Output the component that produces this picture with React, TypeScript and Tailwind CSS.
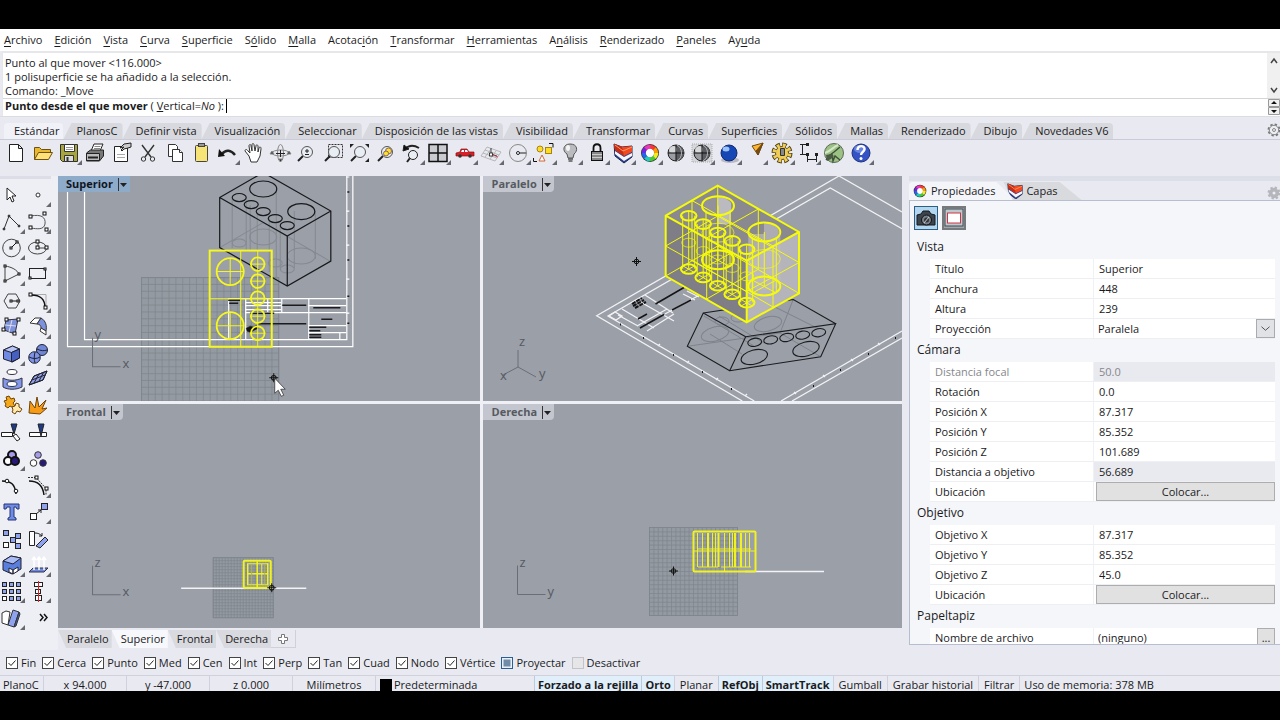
import type { ReactNode } from 'react';

const MENUS: [string, string, string][] = [
	['', 'A', 'rchivo'],
	['', 'E', 'dición'],
	['', 'V', 'ista'],
	['', 'C', 'urva'],
	['', 'S', 'uperficie'],
	['S', 'ó', 'lido'],
	['', 'M', 'alla'],
	['Acotac', 'i', 'ón'],
	['', 'T', 'ransformar'],
	['', 'H', 'erramientas'],
	['A', 'n', 'álisis'],
	['', 'R', 'enderizado'],
	['', 'P', 'aneles'],
	['Ay', 'u', 'da'],
];

const TABS = [
	'Estándar',
	'PlanosC',
	'Definir vista',
	'Visualización',
	'Seleccionar',
	'Disposición de las vistas',
	'Visibilidad',
	'Transformar',
	'Curvas',
	'Superficies',
	'Sólidos',
	'Mallas',
	'Renderizado',
	'Dibujo',
	'Novedades V6',
];

const OSNAPS = [
	'Fin',
	'Cerca',
	'Punto',
	'Med',
	'Cen',
	'Int',
	'Perp',
	'Tan',
	'Cuad',
	'Nodo',
	'Vértice',
];

/* ---------- icons ---------- */

type Tool = { name: string; art: ReactNode; more?: boolean };

const sq = (x: number, y: number, s = 3) => (
	<rect fill="#fff" height={s} stroke="#111" width={s} x={x} y={y} />
);

function ColorWheel() {
	const colors = [
		'#f33',
		'#f90',
		'#ee2',
		'#4c3',
		'#2cb',
		'#26e',
		'#72d',
		'#e3b',
	];
	return (
		<g>
			<circle cx="13" cy="13" fill="#333" r="9" />
			{colors.map((c, i) => (
				<circle
					cx="13"
					cy="13"
					fill="none"
					key={c}
					r="6.3"
					stroke={c}
					strokeDasharray="5.1 40"
					strokeWidth="4"
					transform={`rotate(${i * 45 - 90} 13 13)`}
				/>
			))}
			<circle cx="13" cy="13" fill="#fff" r="4.2" />
		</g>
	);
}

function LayersArt() {
	return (
		<g strokeLinejoin="round">
			<path
				d="M4 4l8 3 10-1v11l-8 6-9-7z"
				fill="#2c3f96"
				stroke="#1c2450"
			/>
			<path d="M5 11l9 6 8-4v3l-8 5-9-7z" fill="#f6f6f6" />
			<path d="M4 4l8 3 10-1v6l-8 4-9-6z" fill="#f2491f" />
			<path d="M4 4l8 3 2 9-9-6z" fill="#c92c12" />
			<path d="M5 5l8 6 9-4" fill="none" stroke="#ff9a70" />
		</g>
	);
}

const Lens = ({ d }: { d?: string }) => (
	<g fill="none" stroke="#444" transform="translate(1 0)">
		<path d="M9 16l-5 5" stroke="#222" strokeWidth="2" />
		<circle cx="13" cy="12" fill="#e9edf4" r="5.5" stroke="#555" />
		{d && <path d={d} stroke="#222" />}
	</g>
);

function Globe({ base }: { base: string }) {
	return (
		<g>
			<circle cx="13" cy="13" fill={base} r="8" stroke="#222" />
			<path d="M13 5a8 8 0 0 1 0 16z" fill="#5b5d62" />
			<ellipse cx="10" cy="9.5" fill="#fff" opacity="0.6" rx="4" ry="3.5" />
			<path d="M5 13h16M13 5v16" stroke="#111" />
			<path
				d="M14 21c6-3 6-13 0-16"
				fill="none"
				stroke="#ddd"
				strokeWidth="0.7"
			/>
		</g>
	);
}

const TOP_TOOLS: Tool[] = [
	{
		name: 'Nuevo',
		art: (
			<path
				d="M6.5 4.5h9l4 4v13h-13zM15.5 4.5v4h4"
				fill="#fff"
				stroke="#222"
			/>
		),
	},
	{
		name: 'Abrir',
		art: (
			<g stroke="#6e5213" strokeLinejoin="round">
				<path d="M4.5 19.5v-12h5l2 2h9v4" fill="#e9b932" />
				<path d="M4.5 19.5l4-7h14l-4 7z" fill="#ffe178" />
			</g>
		),
	},
	{
		name: 'Guardar',
		more: true,
		art: (
			<g stroke="#333">
				<path d="M4.5 4.5h17v17h-15l-2-2z" fill="#a8a43f" />
				<path d="M8.5 4.5h10v7h-10z" fill="#fff" />
				<path d="M8.5 15.5h9v6h-9z" fill="#ddd" />
				<path d="M10 7.5h7M10 9.5h7" stroke="#999" />
				<path d="M11.5 17v4" strokeWidth="2" />
			</g>
		),
	},
	{
		name: 'Imprimir',
		art: (
			<g stroke="#222" strokeLinejoin="round">
				<path d="M9 11l3-7h9l-3 7z" fill="#fff" />
				<path d="M4.5 13l4-3h13v6l-4 5h-13z" fill="#777" />
				<path d="M4.5 13.5h13v7h-13z" fill="#bbb" />
				<path d="M6 17.5h10" strokeWidth="2" />
				<path d="M12.5 6.5h6M12 8.5h6" stroke="#888" />
			</g>
		),
	},
	{
		name: 'Propiedades del documento',
		art: (
			<g stroke="#222">
				<path d="M5.5 6.5h13v15h-13z" fill="#fff" />
				<path d="M8 14.5h8M8 17.5h8" stroke="#aaa" />
				<path d="M11 8l4-4 7-1v4l-3 1-4 1-2 2-1-1 3-3z" fill="#ccc" />
			</g>
		),
	},
	{
		name: 'Cortar',
		art: (
			<g fill="none" stroke="#333">
				<path d="M7 5l9 12M19 5l-9 12" strokeWidth="1.4" />
				<circle cx="8.5" cy="19" r="2.2" />
				<circle cx="17.5" cy="19" r="2.2" />
			</g>
		),
	},
	{
		name: 'Copiar',
		art: (
			<g fill="#fff" stroke="#333">
				<path d="M6.5 4.5h7l2 2v10h-9z" />
				<path d="M10.5 9.5h7l3 3v9h-10z" />
				<path d="M17.5 9.5v3h3" />
			</g>
		),
	},
	{
		name: 'Pegar',
		art: (
			<g stroke="#444">
				<rect fill="#f7e477" height="16" rx="1" width="12" x="7.5" y="5.5" />
				<rect fill="#999" height="3" width="6" x="10.5" y="3.5" />
			</g>
		),
	},
	{
		name: 'Deshacer',
		more: true,
		art: (
			<g>
				<path
					d="M8 14c4-5 9-4 13 1"
					fill="none"
					stroke="#222"
					strokeWidth="2.5"
				/>
				<path d="M4 17l1-8 6 7z" fill="#111" />
			</g>
		),
	},
	{
		name: 'Desplazar vista',
		art: (
			<path
				d="M8 16l-4-5c0-2 2-2 3 0l2 2-1-7c0-2 2-2 2 0l1 5V5c0-2 2-2 2 0l1 6 1-5c0-2 2-1 2 0v6l1-4c1-2 2-1 2 1l-1 7-3 6h-6z"
				fill="#fff"
				stroke="#333"
				strokeLinejoin="round"
			/>
		),
	},
	{
		name: 'Rotar vista',
		art: (
			<g fill="none" stroke="#888">
				<ellipse cx="13.5" cy="13" rx="8.5" ry="3" />
				<ellipse cx="13.5" cy="13" rx="3" ry="8.5" />
				<path d="M13.5 10v7M9 13.5h9" stroke="#222" />
				<path d="M5 11l-2 3h4zM22 11l-2 3h4zM13.5 22l-2-3h4z" fill="#333" />
			</g>
		),
	},
	{ name: 'Zoom', art: <Lens d="M11 11h4M13 9v4M11 14.5h4" /> },
	{
		name: 'Zoom ventana',
		art: (
			<g>
				<rect
					fill="none"
					height="13"
					stroke="#333"
					strokeDasharray="2 1"
					width="14"
					x="8.5"
					y="4.5"
				/>
				<Lens />
			</g>
		),
	},
	{
		name: 'Zoom extensión',
		art: (
			<g>
				<Lens />
				<path d="M4 4h4l-4 4zM23 4h-4l4 4zM23 22h-4l4-4z" fill="#222" />
			</g>
		),
	},
	{
		name: 'Zoom seleccionado',
		art: (
			<g>
				<Lens />
				<circle cx="15.5" cy="11" fill="#ffe02c" r="3" stroke="#866" />
				<circle cx="13" cy="13.5" fill="#ffe02c" r="2.5" stroke="#866" />
			</g>
		),
	},
	{
		name: 'Deshacer vista',
		more: true,
		art: (
			<g fill="none" stroke="#222">
				<path d="M6 9c4-4 9-4 14-1" strokeWidth="2" />
				<path d="M4 11l1-6 5 4z" fill="#111" />
				<path d="M11 18l-3 4" strokeWidth="2" />
				<circle cx="14" cy="15" fill="#e9edf4" r="4.5" />
			</g>
		),
	},
	{
		name: 'Cuatro vistas',
		more: true,
		art: (
			<g>
				<rect
					fill="#c9cbd0"
					height="17"
					stroke="#111"
					strokeWidth="1.5"
					width="18"
					x="4"
					y="4.5"
				/>
				<path d="M4 13h18M13 5v16" stroke="#111" strokeWidth="1.5" />
			</g>
		),
	},
	{
		name: 'Coche',
		more: true,
		art: (
			<g>
				<path
					d="M4 13l4-1 1-3h6l2 3h5v4H4z"
					fill="#d8202a"
					stroke="#811"
					strokeWidth="0.7"
				/>
				<path d="M10 10h2v2H9zM13 10h2l1 2h-3z" fill="#fff" />
				<circle cx="8" cy="16" fill="#333" r="1.8" />
				<circle cx="18" cy="16" fill="#333" r="1.8" />
			</g>
		),
	},
	{
		name: 'Plano de construcción',
		more: true,
		art: (
			<g fill="none" stroke="#aaa" strokeWidth="0.8">
				<path d="M9 7l14 5-6 9-14-5zM7 10l14 5M5 13l14 5M13 9l-6 8M18 11l-6 8" />
				<path d="M13 14V8M13 14l6 2" stroke="#222" />
				<rect fill="#fff" height="3" stroke="#222" width="3" x="11.5" y="13" />
				<path d="M15 15l5 2" stroke="#c33" />
			</g>
		),
	},
	{
		name: 'Vistas',
		more: true,
		art: (
			<g fill="none" stroke="#888">
				<circle cx="13" cy="13" r="8.5" />
				<path d="M13 13h8" stroke="#222" />
				<circle cx="13" cy="13" fill="#fff" r="1.5" stroke="#222" />
			</g>
		),
	},
	{
		name: 'Seleccionar',
		more: true,
		art: (
			<g stroke="#a78312">
				<circle cx="9" cy="9" fill="#ffdc24" r="3" />
				<rect fill="#ffdc24" height="6" width="6" x="14.5" y="7.5" />
				<path d="M11 15l3 6H8z" fill="#fff" stroke="#c63" />
				<path d="M18 3.5h4v4M2.5 18v3.5H6" fill="none" stroke="#111" />
			</g>
		),
	},
	{
		name: 'Ocultar',
		more: true,
		art: (
			<g stroke="#555">
				<path d="M13 4c8 0 8 7 4 10l-1 4h-5l-1-4C5 11 6 4 13 4z" fill="#b9bbbf" />
				<ellipse cx="11" cy="8" fill="#f4f4f4" rx="2" ry="3" stroke="none" />
				<path d="M11 19h5M11.5 21h4" strokeWidth="1.5" />
			</g>
		),
	},
	{
		name: 'Bloquear',
		more: true,
		art: (
			<g stroke="#111">
				<path d="M9.5 12V8c0-5 7-5 7 0v4" fill="none" strokeWidth="1.8" />
				<rect fill="#888" height="9" width="11" x="7.5" y="11.5" />
				<path d="M8 14.5h10M8 17.5h10" stroke="#ccc" />
			</g>
		),
	},
	{ name: 'Capas', more: true, art: <LayersArt /> },
	{ name: 'Propiedades', more: true, art: <ColorWheel /> },
	{ name: 'Sombreado', art: <Globe base="#9b9da2" /> },
	{
		name: 'Sombreado de vista',
		more: true,
		art: (
			<g>
				<path
					d="M3 4h20v18H3z"
					fill="#d6d7db"
					stroke="#aaa"
					strokeDasharray="1 1"
				/>
				<Globe base="#9b9da2" />
			</g>
		),
	},
	{
		name: 'Renderizar',
		more: true,
		art: (
			<g>
				<ellipse cx="14" cy="20" fill="#99a" opacity="0.6" rx="9" ry="3" />
				<circle cx="13" cy="13" fill="#1747b5" r="8" stroke="#112a70" />
				<ellipse cx="10" cy="9" fill="#9cc4ff" rx="3.5" ry="2.5" />
			</g>
		),
	},
	{
		name: 'Foco',
		more: true,
		art: (
			<g stroke="#6d4a12" strokeLinejoin="round">
				<path d="M10 6l11-3-5 12z" fill="#ffb52e" />
				<path d="M21 3l-5 12-2-4z" fill="#7c4a10" />
			</g>
		),
	},
	{
		name: 'Opciones',
		more: true,
		art: (
			<g fill="none">
				<circle
					cx="13"
					cy="13"
					r="8"
					stroke="#4f3e10"
					strokeDasharray="4.2 2.08"
					strokeWidth="5"
				/>
				<circle cx="13" cy="13" fill="#efce58" r="6.5" stroke="#5f4c18" />
				<circle
					cx="13"
					cy="13"
					r="7.5"
					stroke="#efce58"
					strokeDasharray="2.7 3.19"
					strokeDashoffset="-0.6"
					strokeWidth="4"
				/>
				<path d="M11.5 8.5h4v7h-4z" fill="#888" stroke="#333" />
			</g>
		),
	},
	{
		name: 'Acotar',
		more: true,
		art: (
			<g fill="none" stroke="#222">
				<path d="M5 4.5h7M7.5 5v9M5 14.5h7M12.5 15v7M21.5 15v7M13 19.5h8" />
				<path
					d="M11 3h3v3h-3zM11 13h3v3h-3zM20 13h3v3h-3z"
					fill="#222"
					stroke="none"
				/>
			</g>
		),
	},
	{
		name: 'Grasshopper',
		art: (
			<g>
				<circle cx="13" cy="13" fill="#9cc184" r="9.5" stroke="#5a6a54" />
				<path
					d="M4 13c6-2 8-6 13-8"
					fill="none"
					stroke="#d4e8c8"
					strokeWidth="2"
				/>
				<path
					d="M5 20l4-5 4-3 6-5M11 14l1 7 2-5 5 4"
					fill="none"
					stroke="#3d5038"
					strokeWidth="1.4"
				/>
				<path d="M5 15l5-1 3 2-3 3-4 2z" fill="#4a5c45" />
			</g>
		),
	},
	{
		name: 'Ayuda',
		more: true,
		art: (
			<g>
				<circle cx="13" cy="13" fill="#3453c4" r="9" stroke="#22307a" />
				<ellipse cx="12" cy="9" fill="#7f9af0" opacity="0.7" rx="6" ry="4" />
				<path
					d="M9.500 10c0-5 7-5 7-1 0 3-3.500 3-3.500 6"
					fill="none"
					stroke="#fff"
					strokeWidth="2.4"
				/>
				<circle cx="13" cy="18.500" fill="#fff" r="1.5" />
			</g>
		),
	},
];

const SIDE_TOOLS: Tool[] = [
	{
		name: 'Seleccionar objetos',
		art: (
			<path d="M8 6v12l3-3 2 5 2-1-2-5h4z" fill="#fff" stroke="#222" />
		),
	},
	{
		name: 'Punto',
		more: true,
		art: <circle cx="13" cy="13" fill="#fff" r="2" stroke="#333" />,
	},
	{
		name: 'Polilínea',
		more: true,
		art: (
			<g fill="#333" stroke="#333">
				<path d="M5 20L10 7l10 10" fill="none" />
				<circle cx="5" cy="20" r="1" />
				<circle cx="10" cy="7" r="1" />
				<circle cx="20" cy="17" r="1" />
			</g>
		),
	},
	{
		name: 'Curva',
		more: true,
		art: (
			<g fill="none" stroke="#555">
				<path d="M6 7c10-2 15 1 14 8-1 6-8 5-14 4" />
				{sq(4, 6)}
				{sq(18, 3)}
				{sq(4, 17)}
				{sq(20, 19)}
			</g>
		),
	},
	{
		name: 'Círculo',
		more: true,
		art: (
			<g fill="none" stroke="#444">
				<circle cx="12.5" cy="13" r="8.8" />
				<path d="M12 13l6-6" stroke="#111" />
				{sq(11, 12, 2)}
				{sq(17, 6, 2)}
			</g>
		),
	},
	{
		name: 'Elipse',
		more: true,
		art: (
			<g fill="none" stroke="#444">
				<ellipse cx="12.5" cy="13" rx="9" ry="6" />
				<path d="M13 13h8M13 13V7" />
				{sq(11, 11)}
				{sq(20, 11)}
				{sq(11, 5)}
			</g>
		),
	},
	{
		name: 'Arco',
		more: true,
		art: (
			<g fill="none" stroke="#444">
				<path d="M6 5c7 1 12 4 14 8L6 20z" />
				{sq(5, 4, 2)}
				{sq(19, 12, 2)}
				{sq(5, 19, 2)}
			</g>
		),
	},
	{
		name: 'Rectángulo',
		more: true,
		art: (
			<g fill="none" stroke="#222">
				<rect height="10" width="16" x="4.5" y="7.5" />
				{sq(4, 16, 2)}
				{sq(19, 7, 2)}
			</g>
		),
	},
	{
		name: 'Polígono',
		more: true,
		art: (
			<g fill="none" stroke="#444">
				<path d="M9 6h8l4 7-4 7H9l-4-7z" />
				<path d="M13 13h6" stroke="#111" />
				{sq(11, 12, 2)}
				{sq(18, 12, 2)}
			</g>
		),
	},
	{
		name: 'Empalme',
		more: true,
		art: (
			<g fill="none">
				<path d="M6 6.5h15V20" stroke="#aaa" />
				<path d="M6 7c10 0 14 4 14 13" stroke="#111" strokeWidth="1.5" />
				{sq(4, 5)}
				{sq(19, 18)}
			</g>
		),
	},
	{
		name: 'Superficie por puntos',
		more: true,
		art: (
			<g stroke="#334">
				<path d="M7 6l12-1-3 15-11-4z" fill="#7d92d8" />
				<path d="M13 6l-3 12M6 11l11 1" stroke="#dde" />
				{sq(6, 4)}
				{sq(18, 4)}
				{sq(3, 14)}
				{sq(14, 18)}
			</g>
		),
	},
	{
		name: 'Barrido',
		more: true,
		art: (
			<g stroke="#333" strokeLinejoin="round">
				<path d="M5 9l5-5h6l-4 6z" fill="#fff" />
				<path d="M16 4c5 3 6 8 5 13l-5-3c0-2-1-4-4-4z" fill="#7d91dd" />
				<path d="M21 17v4l-6-4 1-3z" fill="#fff" />
			</g>
		),
	},
	{
		name: 'Caja',
		more: true,
		art: (
			<g stroke="#223" strokeLinejoin="round">
				<path d="M4.5 9l9-4 7 3v9l-7 4-9-3z" fill="#6f8ae2" />
				<path d="M4.5 9l9-4 7 3-8 3.5z" fill="#b5c3f5" />
				<path d="M12.500 11.500V21l8-4V8z" fill="#4560c0" />
			</g>
		),
	},
	{
		name: 'Unión booleana',
		more: true,
		art: (
			<g stroke="#223">
				<circle cx="17" cy="9" fill="#6f85d6" r="5.5" />
				<circle cx="9.5" cy="16.5" fill="#7d93e6" r="5.8" />
				<path
					d="M4 16c4 2 8 2 11 0M10 11c-1 4-1 8 0 11M12 8c4 2 7 2 10 1"
					fill="none"
				/>
			</g>
		),
	},
	{
		name: 'Proyectar sobre superficie',
		more: true,
		art: (
			<g stroke="#334">
				<ellipse cx="13" cy="5" fill="#fff" rx="5" ry="2.5" />
				<path d="M4 11c5 3 13 3 19 0v9c-6 3-14 3-19 0z" fill="#8398e8" />
				<ellipse cx="13" cy="17" fill="#fff" rx="5" ry="2.5" />
			</g>
		),
	},
	{
		name: 'Superficie',
		more: true,
		art: (
			<g stroke="#223">
				<path d="M4 18l5-9 13-5-4 9z" fill="#8fa0e4" />
				<path d="M4 18l5-9 13-5-4 9zM7 13l13-5M9 16l5-9M13.500 15l5-9.500" fill="none" />
			</g>
		),
	},
	{
		name: 'Explotar',
		art: (
			<g fill="#f5a81c" stroke="#6e4508">
				<path d="M5 8l3-1-1-3 3-1 2 3 3-1 1 3-2 2 2 3-3 1-2-1-2 2-3-2 1-2z" />
				<path
					d="M13 14l3-1 1-3 3 1v3l3 2-2 3-3-1-2 3-3-2 1-2z"
					fill="#ffe9b0"
				/>
			</g>
		),
	},
	{
		name: 'Descomponer',
		art: (
			<path
				d="M4 20l1-12 5 7 2-11 2 10 7-7-4 9 5-1-7 6z"
				fill="#f79a16"
				stroke="#6e4508"
			/>
		),
	},
	{
		name: 'Recortar',
		art: (
			<g stroke="#222">
				<path d="M2.5 12.5h11v4h-11z" fill="#fff" />
				<path d="M12 4h6l-3 10z" fill="#1e3c86" />
				<path d="M14 16l3-2 4 5-3 2z" fill="#fff" />
			</g>
		),
	},
	{
		name: 'Partir',
		art: (
			<g stroke="#222">
				<path d="M4.5 12.5h17v4h-17z" fill="#fff" />
				<path d="M13 4h6l-3 12z" fill="#1e3c86" />
			</g>
		),
	},
	{
		name: 'Agrupar',
		more: true,
		art: (
			<g stroke="#111" strokeWidth="2">
				<circle cx="13" cy="9" fill="#a59be8" r="4" />
				<circle cx="9" cy="15" fill="#fff" r="4" />
				<circle cx="16" cy="15" fill="#27187a" r="4" />
			</g>
		),
	},
	{
		name: 'Desagrupar',
		art: (
			<g stroke="#333">
				<circle cx="13" cy="9" fill="#a59be8" r="3.3" />
				<circle cx="8.5" cy="17" fill="#fff" r="3.3" />
				<circle cx="18" cy="17" fill="#27187a" r="3.3" />
			</g>
		),
	},
	{
		name: 'Editar puntos',
		art: (
			<g fill="none">
				<path d="M3 8c9 0 13 3 14 13" stroke="#111" strokeWidth="1.5" />
				<circle cx="8" cy="8" fill="#fff" r="1.8" stroke="#111" />
				<circle cx="17" cy="18" fill="#fff" r="1.8" stroke="#111" />
			</g>
		),
	},
	{
		name: 'Puntos de control',
		more: true,
		art: (
			<g fill="none">
				<path d="M3 4.5h8l10 11v6" stroke="#333" strokeDasharray="2 1" />
				<path d="M4 8c9 0 14 5 15 14" stroke="#111" strokeWidth="1.5" />
				{sq(10, 3)}
				{sq(20, 14)}
			</g>
		),
	},
	{
		name: 'Texto',
		art: (
			<path
				d="M5 5h15v5h-2l-1-2h-2v10l2 1v2H9v-2l2-1V8H8l-1 2H5z"
				fill="#6f8ce2"
				stroke="#24337a"
			/>
		),
	},
	{
		name: 'Mover',
		more: true,
		art: (
			<g stroke="#222">
				<rect fill="#fff" height="6" width="6" x="5.5" y="14.5" />
				<rect fill="#8fa2ee" height="6" width="6" x="16.5" y="4.5" />
				<path d="M11 15l5-4M13 11h3v3" fill="none" />
			</g>
		),
	},
	{
		name: 'Copiar objetos',
		art: (
			<g fill="#8fa2ee" stroke="#222">
				<rect height="5" width="5" x="4.5" y="4.5" />
				<rect height="5" width="5" x="16.5" y="7.5" />
				<rect height="5" width="5" x="11.5" y="11.5" />
				<rect fill="#fff" height="5" width="5" x="4.5" y="16.5" />
				<rect height="5" width="5" x="16.5" y="17.5" />
			</g>
		),
	},
	{
		name: 'Rotar',
		art: (
			<g stroke="#222">
				<path d="M4.5 5.5h5v14h-5z" fill="#fff" />
				<path d="M11 20l9-9 3 3-8 8z" fill="#8fa2ee" />
				<path d="M10 7c3 0 5 1 7 3M17 7v3h-3" fill="none" />
			</g>
		),
	},
	{
		name: 'Extruir caja',
		more: true,
		art: (
			<g stroke="#223" strokeLinejoin="round">
				<path d="M4 9l8-5 10 2v11l-9 5-9-4z" fill="#5a7edc" />
				<path d="M4 9l8-5 10 2-8 6z" fill="#a9bbf5" />
				<path d="M10 16l4 2v4l-4-2zM14 18l5-3v4l-5 3z" fill="#fff" />
			</g>
		),
	},
	{
		name: 'Analizar dirección',
		more: true,
		art: (
			<g>
				<path d="M4 20l4-4h15l-4 4z" fill="#6d8ade" stroke="#334" />
				<path
					d="M9 18V6M14 18V6M19 18V6M7 8l2-3 2 3M12 8l2-3 2 3M17 8l2-3 2 3"
					fill="none"
					stroke="#fff"
					strokeWidth="1.5"
				/>
			</g>
		),
	},
	{
		name: 'Matriz',
		more: true,
		art: (
			<g stroke="#222">
				{[3.5, 10.5, 17.5].map((x) =>
					[4.5, 11.5, 18.5].map((y) => (
						<rect
							fill={x < 5 && y > 17 ? '#fff' : '#8fa2ee'}
							height="4"
							key={`${x}-${y}`}
							width="4"
							x={x}
							y={y}
						/>
					))
				)}
			</g>
		),
	},
	{
		name: 'Alinear',
		more: true,
		art: (
			<g fill="#fff" stroke="#222">
				<rect height="4" width="8" x="9.5" y="4.5" />
				<rect height="4" width="5" x="10.5" y="11.5" />
				<rect height="5" width="6" x="10.5" y="17.5" />
				<path d="M13.5 3v21" stroke="#d22" />
			</g>
		),
	},
	{
		name: 'Láminas',
		more: true,
		art: (
			<g stroke="#333">
				<path d="M3 8l4-2 4 1-2 13-6-2z" fill="#fff" />
				<path d="M14 5l6 2-5 15-6-2z" fill="#8fa2ee" />
				<path d="M20 7l1 2-4 12-2 1z" fill="#4059b5" />
			</g>
		),
	},
	{
		name: 'Más herramientas',
		art: (
			<path
				d="M15 9l3 3.5-3 3.5M19 9l3 3.5-3 3.5"
				fill="none"
				stroke="#111"
				strokeWidth="1.5"
			/>
		),
	},
];

function ToolButton({ tool, side }: { tool: Tool; side?: boolean }) {
	return (
		<button
			aria-label={tool.name}
			className="flex min-w-0 flex-1 items-center justify-center"
			type="button"
		>
			<svg
				className="h-[26px] w-[26px] shrink-0"
				viewBox={side ? '1 0 26 26' : '0 0 26 26'}
			>
				{tool.art}
				{tool.more && <path d="M26 20v5h-5z" fill="#666a70" />}
			</svg>
		</button>
	);
}

function Gear({ solid }: { solid?: boolean }) {
	return (
		<svg className="h-[14px] w-[14px]" viewBox="0 0 14 14">
			<circle
				cx="7"
				cy="7"
				fill="none"
				r="5.5"
				stroke={solid ? '#b4b6bc' : '#777'}
				strokeDasharray="2.3 2.02"
				strokeWidth="2"
			/>
			<circle
				cx="7"
				cy="7"
				fill={solid ? '#b4b6bc' : '#eceef3'}
				r="4.7"
				stroke={solid ? '#b4b6bc' : '#888'}
			/>
			<circle
				cx="7"
				cy="7"
				fill={solid ? '#eceef3' : 'none'}
				r="1.5"
				stroke={solid ? 'none' : '#888'}
			/>
		</svg>
	);
}

/* ---------- viewports ---------- */

function Grid({ x, y, size }: { x: number; y: number; size: number }) {
	const step = size / 20;
	const lines = Array.from({ length: 21 }, (_, i) => i * step);
	return (
		<g stroke="#7f858d" strokeWidth="0.7">
			<rect fill="#939aa1" height={size} width={size} x={x} y={y} />
			{lines.map((d) => (
				<path d={`M${x + d} ${y}v${size}M${x} ${y + d}h${size}`} key={d} />
			))}
		</g>
	);
}

function Crosshair({ x, y }: { x: number; y: number }) {
	return (
		<g fill="none" stroke="#111" transform={`translate(${x} ${y})`}>
			<path d="M-4.5 0h9M0-4.5v9" />
			<circle r="2.3" />
		</g>
	);
}

function Axes({
	x,
	y,
	up,
	side,
}: {
	x: number;
	y: number;
	up: string;
	side: string;
}) {
	return (
		<g fill="#555a62" fontSize="13">
			<path d={`M${x} ${y - 29}V${y}h28`} fill="none" stroke="#6a6f77" />
			<text x={x + 2} y={y - 28}>
				{up}
			</text>
			<text x={x + 30} y={y + 1}>
				{side}
			</text>
		</g>
	);
}

function Viewport({
	title,
	viewBox,
	active,
	children,
}: {
	title: string;
	viewBox: string;
	active?: boolean;
	children: ReactNode;
}) {
	return (
		<section className="relative min-h-0 min-w-0 overflow-hidden bg-[#9b9fa8]">
			<svg
				className="absolute inset-0 h-full w-full"
				preserveAspectRatio="xMinYMin slice"
				viewBox={viewBox}
			>
				{children}
			</svg>
			<button
				className={
					active
						? 'absolute top-0 left-0 flex h-4 items-center gap-1 bg-[#8eabca] pr-[2px] pl-2 font-bold text-[#10161f]'
						: 'absolute top-0 left-0 flex h-4 items-center gap-1 rounded-br-sm bg-[#c3c6ce] pr-[2px] pl-2 font-bold text-[#565a61]'
				}
				type="button"
			>
				{title}
				<svg className="h-[13px] w-[11px]" viewBox="0 0 11 13">
					<path d="M1.5 0v13" stroke="#333" />
					<path d="M3 5h7l-3.500 4z" fill="#222" />
				</svg>
			</button>
		</section>
	);
}

function TopView() {
	const small = [264, 281, 298, 316, 333];
	return (
		<>
			<Grid size={137} x={141.5} y={277.5} />
			<g fill="none" stroke="#858a91">
				<path d="M232 198v50M246 198v52M250 205v45M276 189v90M294 211v52M315 211v48M257 212v54M269 212v60M280 226v42M294 226v42" />
				<path d="M219.5 247.5l43.5-25 67.5 39" />
				<ellipse cx="263" cy="237" rx="13.5" ry="8" />
				<ellipse cx="301" cy="256" rx="14" ry="8" />
				<ellipse cx="239" cy="243" rx="7" ry="4" />
				<ellipse cx="275" cy="263" rx="7" ry="4" />
				<ellipse cx="287" cy="269" rx="7" ry="4" />
			</g>
			<g fill="none" stroke="#fff" strokeWidth="1.2">
				<path d="M67.5 176v170.5h285V176M84.5 176v163.5h262V176" />
				<path d="M346 177h3M346 211h3M346 245h3M346 279h3M346 313h3" />
				<path d="M228 298.5h118M245 312.5h101M308 305.5h38M308 325.5h38M308 332.5h38" />
				<path d="M228.5 298v41M245.5 298v41M267.5 298v14M281.5 298v14M308.5 298v41M339.5 332v7" />
				<path d="M245 302.5h36M245 305.5h36M245 309.5h36" />
			</g>
			<g stroke="#1b1b1e" strokeWidth="1.5">
				<path d="M282 305h24M313 307.5h27M321 319h11M258 323.5h48M309 327h17M309 330.5h11M309 334.5h12M309 337h12M228 300h12M229 303h9M250 313h24" />
				<path d="M347 192h2M347 226h2M347 260h2M347 296h2M347 323h2" />
				<path
					d="M246 328l4-2 4 1 2-2 2 3-4 2-4 2-3-1z"
					fill="#111"
					strokeWidth="0.5"
				/>
			</g>
			<g fill="none" stroke="#17181b" strokeWidth="1.2">
				<path d="M219.5 197.5L263 172.5l67.5 38.5v50L287 286l-67.5-38.5zM219.5 197.5L287 236l43.5-25M287 236v50" />
				<ellipse cx="263" cy="189" rx="13.5" ry="8" />
				<ellipse cx="301" cy="211.5" rx="13.5" ry="8" />
				{[0, 1, 2, 3, 4].map((i) => (
					<ellipse
						cx={239 + i * 12}
						cy={197.5 + i * 7}
						key={i}
						rx="7"
						ry="4"
					/>
				))}
			</g>
			<g fill="none" stroke="#f5f71f">
				<rect height="96" strokeWidth="2" width="62" x="209.5" y="250.5" />
				<path d="M240.5 251v95M210 298.5h61M257.5 251v95" />
				<g strokeWidth="1.8">
					<circle cx="230" cy="271.5" r="13.5" />
					<circle cx="230" cy="325.5" r="13.5" />
					{small.map((y) => (
						<circle cx="257.5" cy={y} key={y} r="6.8" />
					))}
				</g>
				<path d="M217 271.5h27M230 258v27M217 325.5h27M230 312v27" />
				{small.map((y) => (
					<path d={`M250 ${y}h15`} key={y} />
				))}
			</g>
			<Axes side="x" up="y" x={92.5} y={366.5} />
			<Crosshair x={273.5} y={377.5} />
			<path
				d="M274.5 378v15l3.500-3 3 6 2.500-1-3-6h4.500z"
				fill="#fff"
				stroke="#222"
				strokeWidth="0.7"
			/>
		</>
	);
}

function PerspectiveView() {
	const small = [0, 1, 2, 3, 4].map((i) => [688.7 + i * 14.5, 215.7 + i * 8.4]);
	const big = [
		[718, 205.7],
		[764.3, 232],
	];
	return (
		<>
			<g fill="none" stroke="#f2f2f4" strokeWidth="1.3">
				<path d="M902 212l-63-36L596.7 315.7 742.3 401M902 228.7L830.3 188 608 316l146.3 85" />
				<path d="M781 401l121-70M792 401l110-63" />
				<path d="M618 315l20 11M622 309l32 19M637 300l37 21M645 295l28 18M665 314l40-22M647 331l27-17M637 326l30-17M683 294l12 6M687 291l12 6M691 289l12 6M609 316l6-4 7 4-6 4z" />
				<path
					d="M658 346l2-2M687 363l2-2M716 380l2-2M745 396l2-2M796 394l-2-2M825 377l-2-2M853 361l-2-2M880 345l-2-2"
				/>
			</g>
			<g stroke="#151518" strokeWidth="1.500">
				<path d="M655.500 304l28.500-16.500M640 328l24-13.500M672 310l19-10M638 319l9-5" />
				<path
					d="M632 304l10-6M633 306l11-6M635 308l11-6"
					strokeDasharray="4 1"
					strokeWidth="2"
				/>
				<path
					d="M620 324.5h1M643 338h1M673 355h1M702 372h1M731 389h1M813 386h1M840 370h1M868 354h1M895 338h1"
					strokeWidth="2"
				/>
			</g>
			<g fill="none" stroke="#7f848b">
				<path d="M687.3 346.3L780 333l13.300-33.700M780 333l40.700 23.700M754 346l-50-30M764 343l-45-27M819 329l-60-30M742 354l-32-20" />
				<ellipse
					cx="715"
					cy="334"
					rx="14"
					ry="7"
					transform="rotate(-15 715 334)"
				/>
				<ellipse
					cx="768"
					cy="324"
					rx="14"
					ry="7"
					transform="rotate(-15 768 324)"
				/>
				<ellipse cx="722" cy="321" rx="7" ry="4" />
				<ellipse cx="738" cy="318" rx="7" ry="4" />
			</g>
			<g fill="none" stroke="#1b1c1f" strokeWidth="1.1">
				<path d="M703.3 313l-16 33.3 42.4 24.4 16-34zM745.7 336.7l90-13-15 33-91 14M703.3 313l90-13.5 42.4 24.2" />
				{[0, 1, 2, 3, 4].map((i) => (
					<ellipse
						cx="0"
						cy="0"
						key={i}
						rx="7"
						ry="4"
						transform={`translate(${754.7 + i * 16} ${342.3 - i * 2.4}) rotate(-10)`}
					/>
				))}
				<ellipse
					cx="754.3"
					cy="357"
					rx="13.5"
					ry="7"
					transform="rotate(-15 754.3 357)"
				/>
				<ellipse
					cx="806"
					cy="349"
					rx="13.5"
					ry="7"
					transform="rotate(-15 806 349)"
				/>
			</g>
			<path d="M665.7 215.7l52-30 81.3 46.3-52.3 28.7z" fill="#8a8990" />
			<path d="M665.7 215.7l81 45v61.600l-81-46.300z" fill="#7f7d85" />
			<path d="M746.7 260.7L799 232v61.300l-52.300 29z" fill="#b6b4bb" />
			<path
				d="M748.3 234v50c4 8 26 8 32 0v-50z"
				fill="#bdbbc1"
				opacity="0.7"
			/>
			<ellipse cx="718" cy="205.7" fill="#93929a" rx="16" ry="9.5" />
			<path d="M718 197v27h13v-21c-3-4-8-6-13-6z" fill="#bcbac1" />
			<path d="M764 223v18c8 0 15-4 15-9s-6-9-15-9z" fill="#aeacb3" />
			<g fill="none" stroke="#f5fb08">
				<g strokeWidth="2">
					<path d="M665.7 215.7l52-30 81.3 46.3v61.300l-52.300 29-81-46.300zM665.7 215.700l81 45L799 232M746.7 260.700v61.600" />
					{big.map(([x, y]) => (
						<ellipse cx={x} cy={y} key={x} rx="16" ry="9.5" />
					))}
					{small.map(([x, y]) => (
						<g key={x}>
							<ellipse cx={x} cy={y} rx="7.8" ry="4.8" />
							<ellipse cx={x} cy={y + 53.3} rx="7.8" ry="4.8" />
						</g>
					))}
					{big.map(([x, y]) => (
						<ellipse cx={x} cy={y + 54} key={x} rx="16" ry="9.5" />
					))}
				</g>
				<path d="M717.7 186v60M665.7 276l52-30 81.3 47.300M665.7 246l81 45.500 52.300-29M706.700 238v61M773 246v61M706.700 238l51.600-29M692 200.500l81 45.500M758.300 209v60M692 200.500v60M706.700 299l52-30M692 260l81 47M665.700 246l52-30 81.300 46.500" />
				{small.map(([x, y]) => (
					<g key={x}>
						<path
							d={`M${x - 6} ${y}v53M${x + 6} ${y}v53M${x} ${y - 4}v57M${x - 6} ${y + 50}l12 7M${x + 6} ${y + 50}l-12 7`}
						/>
						<ellipse
							cx={x}
							cy={y + 27}
							rx="7"
							ry="4.5"
							strokeWidth="0.7"
						/>
					</g>
				))}
				{big.map(([x, y]) => (
					<g key={x}>
						<path
							d={`M${x - 12} ${y + 5}v54M${x + 12} ${y + 5}v54M${x} ${y}v54M${x - 12} ${y + 48}l24 13M${x + 12} ${y + 48}l-24 13`}
						/>
						<ellipse
							cx={x}
							cy={y + 27}
							rx="16"
							ry="9.5"
							strokeWidth="0.7"
						/>
					</g>
				))}
			</g>
			<Crosshair x={636.5} y={261.5} />
			<g fill="#555a62" fontSize="13">
				<path
					d="M518 350v17l-15 8M518 367l18 10"
					fill="none"
					stroke="#6a6f77"
				/>
				<text x="519" y="346">
					z
				</text>
				<text x="500" y="380">
					x
				</text>
				<text x="539" y="378">
					y
				</text>
			</g>
		</>
	);
}

function FrontView() {
	return (
		<>
			<Grid size={60} x={213} y={557.5} />
			<path d="M181 588h125" stroke="#f4f4f6" strokeWidth="1.5" />
			<g fill="none" stroke="#f0f222">
				<rect
					height="27"
					rx="1"
					strokeWidth="2"
					width="27"
					x="243.5"
					y="560.5"
				/>
				<path
					d="M247.5 563v22M257 561v26M267.5 563v22M247 573.5h21"
					strokeWidth="1.5"
				/>
				<path d="M261.500 563v22M248 563.500h20M248 584.500h20" />
				<path d="M251.5 564v20M264.5 564v20" stroke="#b3b548" />
			</g>
			<Axes side="x" up="z" x={92.5} y={594.5} />
			<Crosshair x={271.5} y={587.5} />
		</>
	);
}

function RightView() {
	const thick = [708, 718.5, 735, 741];
	const thin = [697.5, 702.5, 712.5, 715.5, 724.5, 729.5, 732.5, 745.5, 749.5];
	return (
		<>
			<Grid size={88} x={649.5} y={527.5} />
			<path d="M745 571.5h79" stroke="#f4f4f6" strokeWidth="1.5" />
			<g fill="none" stroke="#f0f222">
				<rect
					height="40"
					rx="1"
					strokeWidth="2"
					width="62"
					x="693.5"
					y="531.5"
				/>
				{thick.map((x) => (
					<path d={`M${x} 533v34`} key={x} strokeWidth="2" />
				))}
				{thin.map((x) => (
					<path d={`M${x} 533v34`} key={x} />
				))}
				<path d="M694 551h61M697 549h54M698 567h20M721 567h30M724.500 567v5" />
			</g>
			<Axes side="y" up="z" x={517.5} y={594.5} />
			<Crosshair x={673.5} y={571} />
		</>
	);
}

/* ---------- properties panel ---------- */

type Row = {
	label: string;
	value: string;
	kind?: 'select' | 'button' | 'file';
	dim?: boolean;
	locked?: boolean;
};

const GROUPS: { title: string; rows: Row[] }[] = [
	{
		title: 'Vista',
		rows: [
			{ label: 'Título', value: 'Superior' },
			{ label: 'Anchura', value: '448' },
			{ label: 'Altura', value: '239' },
			{ label: 'Proyección', value: 'Paralela', kind: 'select' },
		],
	},
	{
		title: 'Cámara',
		rows: [
			{ label: 'Distancia focal', value: '50.0', dim: true, locked: true },
			{ label: 'Rotación', value: '0.0' },
			{ label: 'Posición X', value: '87.317' },
			{ label: 'Posición Y', value: '85.352' },
			{ label: 'Posición Z', value: '101.689' },
			{ label: 'Distancia a objetivo', value: '56.689', locked: true },
			{ label: 'Ubicación', value: 'Colocar...', kind: 'button' },
		],
	},
	{
		title: 'Objetivo',
		rows: [
			{ label: 'Objetivo X', value: '87.317' },
			{ label: 'Objetivo Y', value: '85.352' },
			{ label: 'Objetivo Z', value: '45.0' },
			{ label: 'Ubicación', value: 'Colocar...', kind: 'button' },
		],
	},
	{
		title: 'Papeltapiz',
		rows: [{ label: 'Nombre de archivo', value: '(ninguno)', kind: 'file' }],
	},
];

function PropertyRow({ id, row }: { id: string; row: Row }) {
	return (
		<div className="ml-5 flex h-5 border-b border-[#eeeff3] bg-white">
			<label
				className={
					row.dim
						? 'w-[164px] shrink-0 border-r border-[#f0f1f4] pl-[5px] leading-[19px] text-[#85878c]'
						: 'w-[164px] shrink-0 border-r border-[#f0f1f4] pl-[5px] leading-[19px]'
				}
				htmlFor={id}
			>
				{row.label}
			</label>
			{row.kind === 'button' && (
				<button
					className="ml-[2px] min-w-0 flex-1 border border-[#adadad] bg-[#e1e1e1] leading-[16px]"
					id={id}
					type="button"
				>
					{row.value}
				</button>
			)}
			{row.kind === 'select' && (
				<div className="relative flex min-w-0 flex-1">
					<select
						className="min-w-0 flex-1 appearance-none bg-white pl-1 outline-none"
						defaultValue={row.value}
						id={id}
					>
						<option>{row.value}</option>
						<option>Perspectiva</option>
					</select>
					<svg
						className="pointer-events-none absolute top-0 right-0 h-[19px] w-[19px] border border-[#a9abaf] bg-[#e1e2e5]"
						viewBox="0 0 19 19"
					>
						<path d="M5 7.5l4.500 4 4.500-4" fill="none" stroke="#444" />
					</svg>
				</div>
			)}
			{row.kind === 'file' && (
				<>
					<input
						className="min-w-0 flex-1 bg-white pl-1 outline-none"
						defaultValue={row.value}
						id={id}
					/>
					<button
						aria-label="Examinar"
						className="w-[18px] border border-[#adadad] bg-[#e1e1e1] leading-[16px]"
						type="button"
					>
						...
					</button>
				</>
			)}
			{!row.kind && (
				<input
					className={
						row.dim
							? 'min-w-0 flex-1 bg-[#e9eaef] pl-[5px] text-[#85878c] outline-none'
							: row.locked
								? 'min-w-0 flex-1 bg-[#e9eaef] pl-[5px] outline-none'
								: 'min-w-0 flex-1 bg-white pl-[5px] outline-none'
					}
					defaultValue={row.value}
					id={id}
					readOnly={row.locked}
				/>
			)}
		</div>
	);
}

function PropertiesPanel() {
	return (
		<aside className="mb-[5px] flex w-[371px] shrink-0 flex-col">
			<div className="h-[5px] bg-[#dcdee8]" />
			<div className="flex h-5 items-end border-b border-[#b9bdd0]">
				<button
					className="flex h-[18px] items-center gap-1 rounded-tl bg-[#f4f5f9] pr-5 pl-1 [clip-path:polygon(0_0,82%_0,100%_100%,0_100%)]"
					type="button"
				>
					<svg className="h-[14px] w-[14px]" viewBox="3 3 20 20">
						<ColorWheel />
					</svg>
					Propiedades
				</button>
				<button
					className="-ml-3 flex h-[18px] items-center gap-[3px] bg-[#d9dade] pr-6 pl-1 [clip-path:polygon(0_0,72%_0,100%_100%,12%_100%)]"
					type="button"
				>
					<svg className="h-4 w-4" viewBox="3 3 20 20">
						<LayersArt />
					</svg>
					Capas
				</button>
				<div className="ml-auto -mr-px">
					<Gear solid />
				</div>
			</div>
			<div className="min-h-0 flex-1 overflow-hidden border-b border-l border-[#b9bdd0] bg-[#f5f6f9]">
				<div className="flex h-[35px] gap-1 pt-[5px] pl-1">
					<button
						aria-label="Cámara de la vista"
						className="h-6 w-6 border border-[#2d5f85] bg-[#b4d7f1]"
						type="button"
					>
						<svg viewBox="0 0 22 22">
							<path
								d="M2 8l4-1 2-3h6l2 3 4 1v10H2z"
								fill="#3c454d"
								stroke="#14181c"
							/>
							<circle cx="11.5" cy="13" fill="#798087" r="5" stroke="#111" />
							<circle cx="11.5" cy="13" fill="#30363c" r="2.5" />
							<path d="M9 16l5-6" stroke="#c5cbd1" />
						</svg>
					</button>
					<button
						aria-label="Marco"
						className="h-6 w-6 border-2 border-[#777a7d] bg-[#a0a8ad]"
						type="button"
					>
						<svg viewBox="0 0 20 20">
							<rect
								fill="#bfc8cc"
								height="17"
								stroke="#3e4f57"
								width="18"
								x="1"
								y="1"
							/>
							<rect
								fill="#fff"
								height="10"
								stroke="#cf3545"
								width="13"
								x="3.5"
								y="5"
							/>
						</svg>
					</button>
				</div>
				<div className="pr-[5px]">
					{GROUPS.map((group) => (
						<fieldset key={group.title}>
							<legend className="h-[23px] pl-[7px] text-[12px] leading-[22px]">
								{group.title}
							</legend>
							{group.rows.map((row) => (
								<PropertyRow
									id={`${group.title}-${row.label}`}
									key={row.label}
									row={row}
								/>
							))}
						</fieldset>
					))}
				</div>
			</div>
		</aside>
	);
}

/* ---------- bottom bars ---------- */

function Snap({ label, state }: { label: string; state: 'on' | 'mid' | 'off' }) {
	return (
		<label className="flex items-center gap-[3px]">
			<span className="relative flex">
				<input
					className={
						state === 'off'
							? 'h-3 w-3 appearance-none border border-[#c3c4c8] bg-[#e6e6e8]'
							: state === 'mid'
								? 'h-3 w-3 appearance-none border border-[#2a5f90] bg-[#e8f1f8]'
								: 'h-3 w-3 appearance-none border border-[#444] bg-white'
					}
					defaultChecked={state === 'on'}
					type="checkbox"
				/>
				{state !== 'off' && (
					<svg
						className="pointer-events-none absolute inset-0 h-3 w-3"
						viewBox="0 0 12 12"
					>
						{state === 'on' ? (
							<path d="M2.5 6l2.500 2.500 4.500-5" fill="none" stroke="#222" />
						) : (
							<path d="M2.5 2.5h7v7h-7z" fill="#6f8da8" />
						)}
					</svg>
				)}
			</span>
			{label}
		</label>
	);
}

const MODES: [string, boolean][] = [
	['Forzado a la rejilla', true],
	['Orto', true],
	['Planar', false],
	['RefObj', true],
	['SmartTrack', true],
	['Gumball', false],
	['Grabar historial', false],
	['Filtrar', false],
];

export default function App() {
	return (
		<div
			className="flex h-screen min-h-[720px] flex-col overflow-hidden
				bg-[#e9eaf1] font-['Open_Sans','Noto_Sans',sans-serif] text-[11px]
				leading-[14px] text-[#1b1b1d]"
		>
			<div className="h-[29px] shrink-0 bg-black" />

			<nav className="flex h-[22px] shrink-0 items-center gap-3 bg-white pl-1">
				{MENUS.map(([pre, key, post]) => (
					<button
						className="whitespace-nowrap"
						key={key + post}
						type="button"
					>
						{pre}
						<span className="underline underline-offset-2">{key}</span>
						{post}
					</button>
				))}
			</nav>

			<div className="ml-[2px] shrink-0 border-t-2 border-l border-[#e6e7ea] bg-white">
				<div className="flex h-[45px]">
					<div className="flex flex-1 flex-col justify-end pl-[2px]">
						<p>Punto al que mover &lt;116.000&gt;</p>
						<p>1 polisuperficie se ha añadido a la selección.</p>
						<p>Comando: _Move</p>
					</div>
					<div className="flex w-[13px] flex-col items-center justify-between bg-[#f0f0f1] py-1">
						<svg className="h-2 w-2" viewBox="0 0 8 8">
							<path
								d="M1 6l3-4 3 4"
								fill="none"
								stroke="#444"
								strokeWidth="1.5"
							/>
						</svg>
						<svg className="h-2 w-2" viewBox="0 0 8 8">
							<path
								d="M1 2l3 4 3-4"
								fill="none"
								stroke="#444"
								strokeWidth="1.5"
							/>
						</svg>
					</div>
				</div>
				<div className="flex h-[18px] items-start border-t border-[#d4d5d9] pl-[2px]">
					<label className="whitespace-pre" htmlFor="prompt">
						<b>Punto desde el que mover</b> ( <u>V</u>ertical=<i>No</i> ):
					</label>
					<span className="ml-[2px] h-[14px] w-px bg-black" />
					<input className="h-4 min-w-0 flex-1 outline-none" id="prompt" />
					<svg className="h-4 w-3" viewBox="0 0 12 16">
						<path
							d="M.5.5h11v7H.5zM.5 8.5h11v7H.5z"
							fill="#f0f0f0"
							stroke="#999"
						/>
						<path d="M6 2l3 3H3zM6 14l3-3H3z" fill="#111" />
					</svg>
				</div>
			</div>

			<div className="flex shrink-0 items-end border-t border-b border-t-[#dcdde3] border-b-[#c9cbd8] pt-[6px]">
				<div className="flex pl-1">
					{TABS.map((tab, i) => (
						<button
							className={
								i === 0
									? 'h-4 rounded-t bg-[#f1f2f8] pr-1 pl-[10px] whitespace-nowrap'
									: 'h-4 rounded-tr bg-[#d8d9de] pr-[5px] pl-[13px] whitespace-nowrap [clip-path:polygon(8px_0,100%_0,100%_100%,0_100%)]'
							}
							key={tab}
							type="button"
						>
							{tab}
						</button>
					))}
				</div>
				<div className="ml-auto -mr-px pb-[2px]">
					<Gear />
				</div>
			</div>

			<div className="flex h-[36px] w-[874px] shrink-0 items-start pl-[3px]">
				{TOP_TOOLS.map((tool) => (
					<ToolButton key={tool.name} tool={tool} />
				))}
			</div>

			<main className="flex min-h-0 flex-1">
				<div className="flex w-[58px] shrink-0 flex-col bg-[#eeeff5]">
					<div className="mb-[3px] h-[3px] w-[51px] bg-[#dcdde6]" />
					<div className="grid h-[449px] w-[52px] auto-rows-fr grid-cols-2">
						{SIDE_TOOLS.map((tool) => (
							<ToolButton key={tool.name} side tool={tool} />
						))}
					</div>
				</div>

				<div className="flex min-w-0 flex-1 flex-col">
					<div className="grid min-h-0 flex-1 grid-cols-[423fr_419fr] grid-rows-[225fr_224fr] gap-[3px] bg-[#eef0f6]">
						<Viewport active title="Superior" viewBox="58 176 422 225">
							<TopView />
						</Viewport>
						<Viewport title="Paralelo" viewBox="483 176 419 225">
							<PerspectiveView />
						</Viewport>
						<Viewport title="Frontal" viewBox="58 404 422 224">
							<FrontView />
						</Viewport>
						<Viewport title="Derecha" viewBox="483 404 419 224">
							<RightView />
						</Viewport>
					</div>
					<div className="flex h-[22px] shrink-0 pt-[2px] pb-[2px]">
						{['Paralelo', 'Superior', 'Frontal', 'Derecha'].map((name) => (
							<button
								className={
									name === 'Superior'
										? 'bg-[#f7f8fc] pr-[3px] pl-[9px] [clip-path:polygon(0_0,100%_0,100%_100%,8px_100%)]'
										: 'bg-[#d9dadf] pr-[3px] pl-[9px] [clip-path:polygon(0_0,100%_0,100%_100%,8px_100%)]'
								}
								key={name}
								type="button"
							>
								{name}
							</button>
						))}
						<button
							aria-label="Nueva vista"
							className="border-r border-b border-[#cfd0d8] px-[7px]"
							type="button"
						>
							<svg className="h-[10px] w-[10px]" viewBox="0 0 10 10">
								<path
									d="M3.5.5h3v3h3v3h-3v3h-3v-3h-3v-3h3z"
									fill="#fff"
									stroke="#777"
								/>
							</svg>
						</button>
					</div>
				</div>

				<div className="w-[7px] shrink-0" />
				<PropertiesPanel />
			</main>

			<div className="flex h-[25px] shrink-0 items-center gap-[6px] pl-[6px] whitespace-nowrap">
				{OSNAPS.map((label) => (
					<Snap key={label} label={label} state="on" />
				))}
				<Snap label="Proyectar" state="mid" />
				<Snap label="Desactivar" state="off" />
			</div>

			<footer
				className="flex h-4 shrink-0 overflow-hidden border-t
					border-[#cfd2dc] leading-[18px] whitespace-nowrap"
			>
				<div className="w-[44px] border-r border-[#cfd2dc] pl-[3px]">
					PlanoC
				</div>
				{['x 94.000', 'y -47.000', 'z 0.000', 'Milímetros'].map((cell) => (
					<div
						className="w-[83px] border-r border-[#cfd2dc] text-center"
						key={cell}
					>
						{cell}
					</div>
				))}
				<div className="flex w-[158px] items-start gap-[2px] pl-1">
					<span className="mt-[3px] h-3 w-3 bg-black" />
					Predeterminada
				</div>
				{MODES.map(([label, on]) => (
					<button
						className={
							on
								? 'border-l border-[#bccbdc] bg-[#e0effa] px-[3px] font-bold'
								: 'border-l border-[#cfd2dc] px-[5px]'
						}
						key={label}
						type="button"
					>
						{label}
					</button>
				))}
				<div className="flex-1 border-l border-[#cfd2dc] pl-1">
					Uso de memoria: 378 MB
				</div>
			</footer>

			<div className="h-[29px] shrink-0 bg-black" />
		</div>
	);
}
